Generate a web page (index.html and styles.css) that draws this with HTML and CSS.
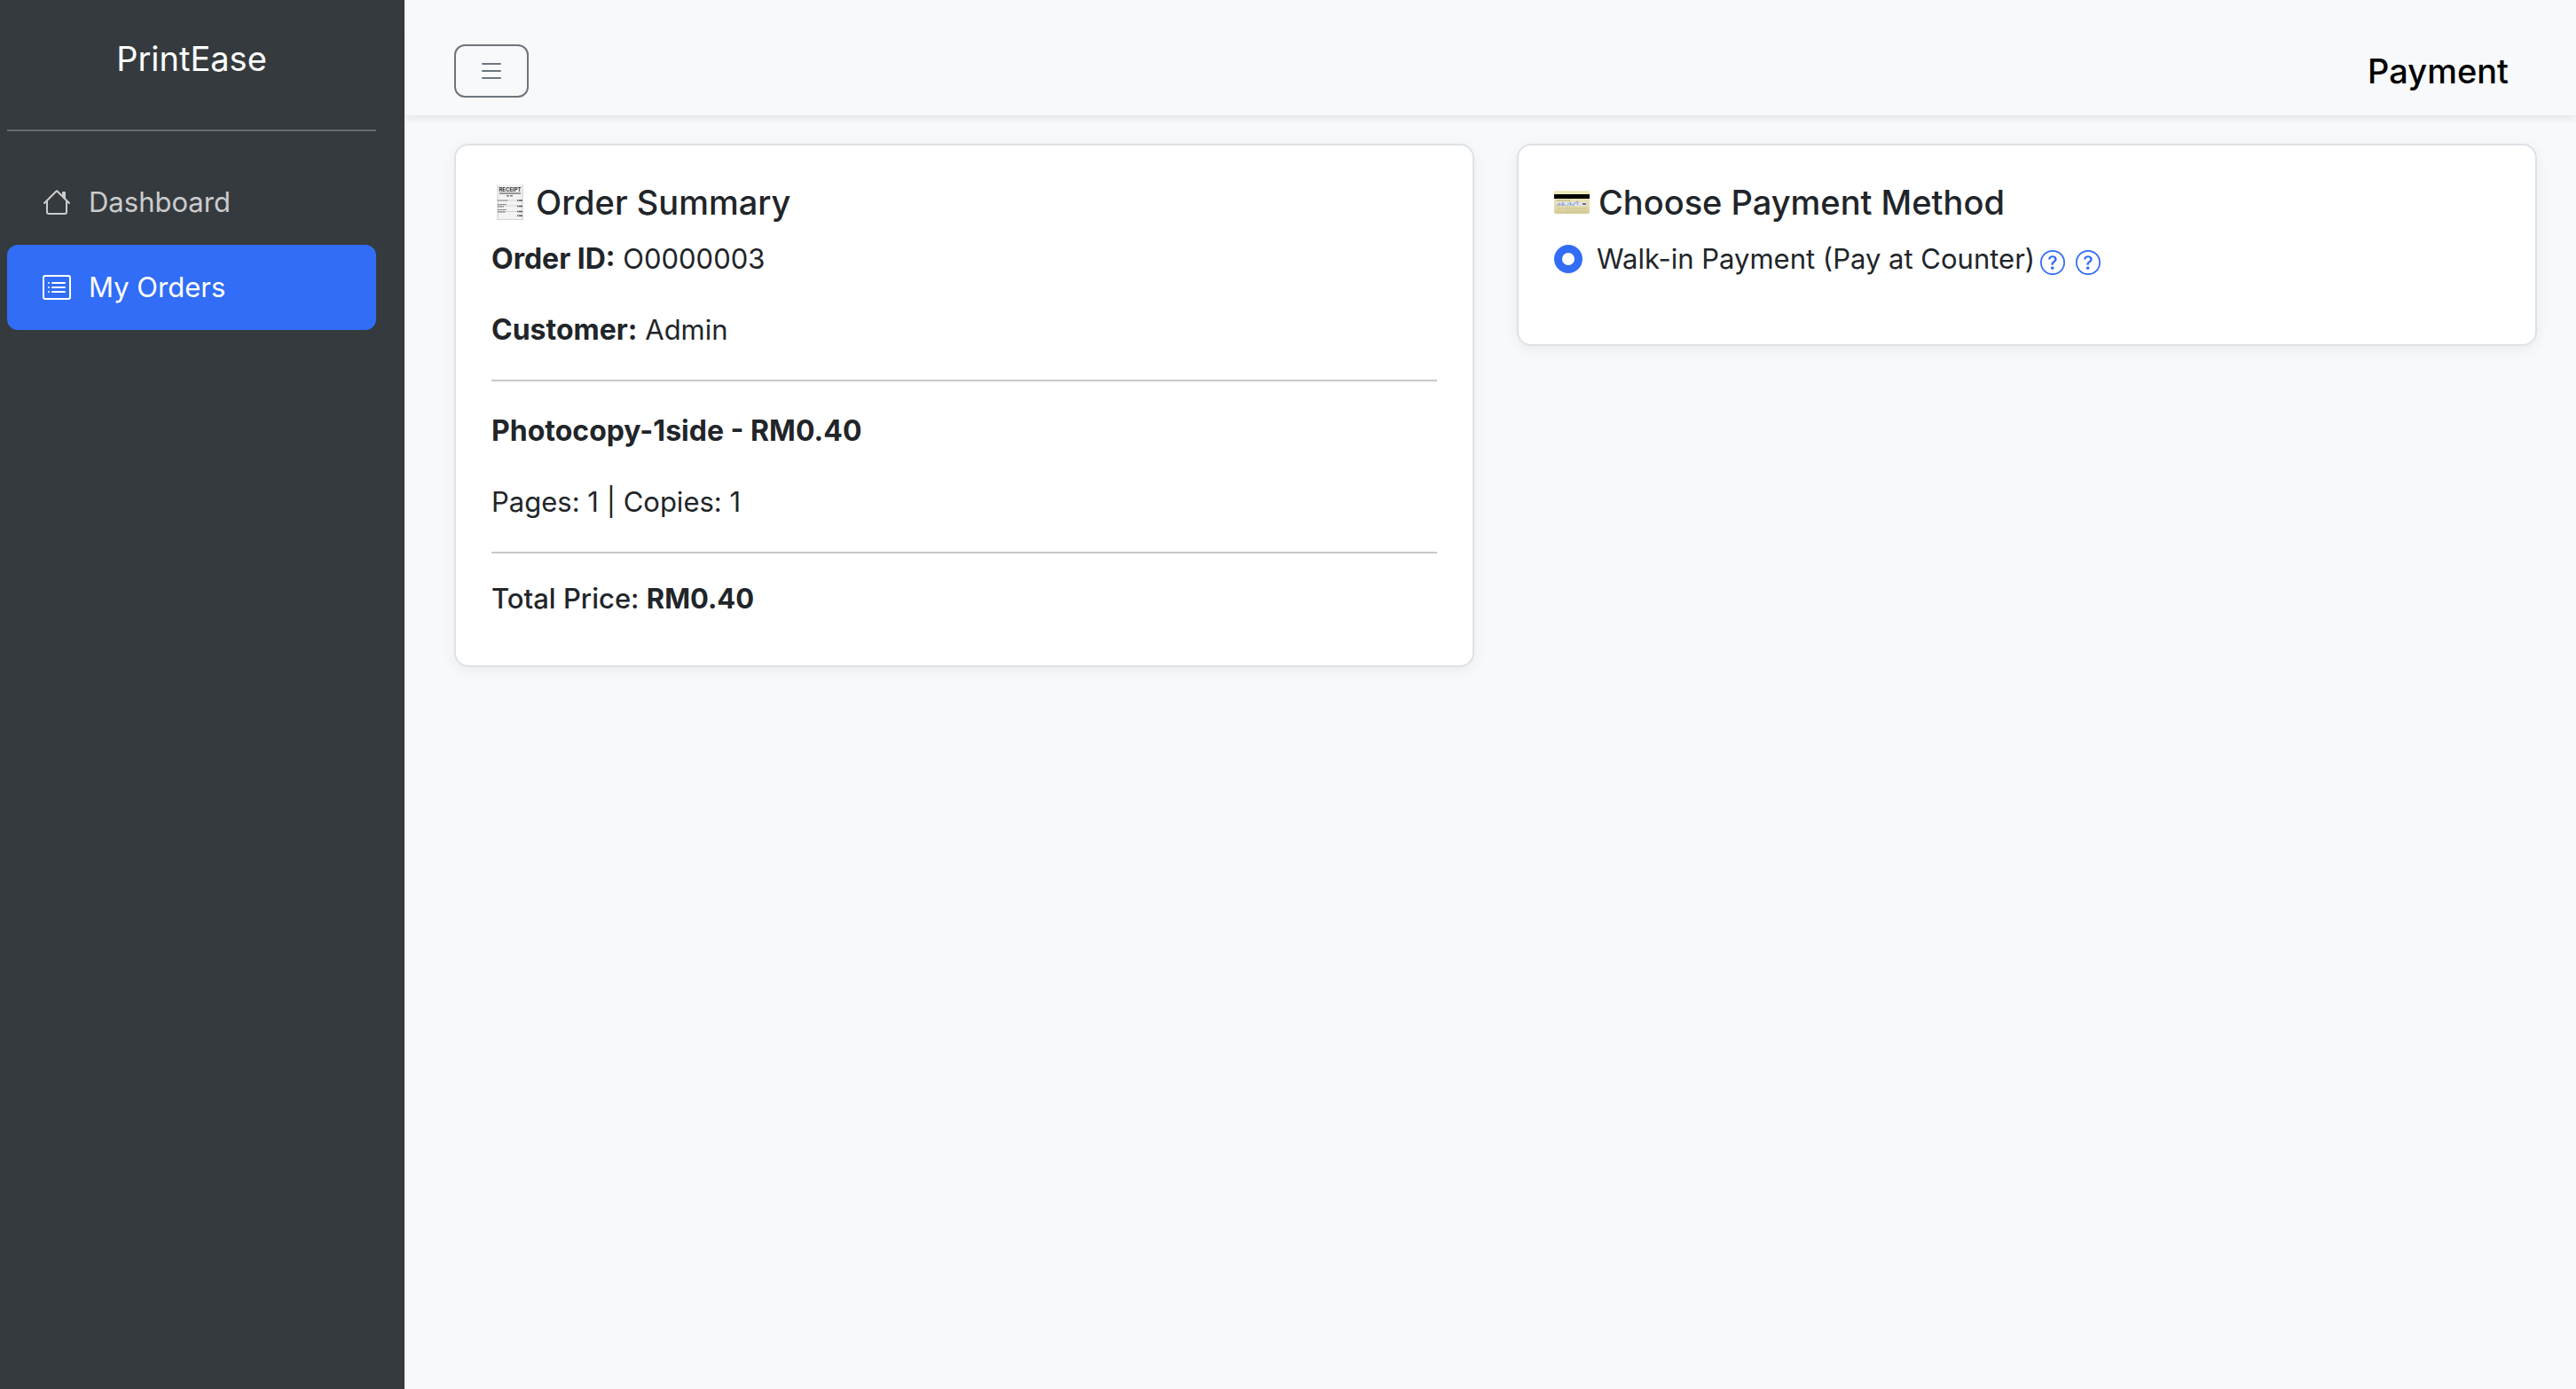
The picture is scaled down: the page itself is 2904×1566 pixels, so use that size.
FILE: index.html
```html
<!DOCTYPE html>
<html lang="en">
<head>
<meta charset="utf-8">
<meta name="viewport" content="width=device-width, initial-scale=1">
<title>Payment - PrintEase</title>
<link rel="stylesheet" href="styles.css">
</head>
<body>
<div class="layout">
  <aside class="sidebar">
    <div class="brand">PrintEase</div>
    <hr class="sidebar-divider">
    <nav class="menu" aria-label="Main">
      <a class="menu-link" href="#dashboard">
        <svg class="menu-icon" viewBox="0 0 16 16" fill="currentColor" aria-hidden="true"><path d="M8.707 1.5a1 1 0 0 0-1.414 0L.646 8.146a.5.5 0 0 0 .708.708L2 8.207V13.5A1.5 1.5 0 0 0 3.5 15h9a1.5 1.5 0 0 0 1.5-1.5V8.207l.646.647a.5.5 0 0 0 .708-.708L13 5.793V2.5a.5.5 0 0 0-.5-.5h-1a.5.5 0 0 0-.5.5v1.293zM13 7.207V13.5a.5.5 0 0 1-.5.5h-9a.5.5 0 0 1-.5-.5V7.207l5-5z"/></svg>
        <span>Dashboard</span>
      </a>
      <a class="menu-link active" href="#orders" aria-current="page">
        <svg class="menu-icon" viewBox="0 0 16 16" fill="currentColor" aria-hidden="true"><path d="M14.5 2a.5.5 0 0 1 .5.5v11a.5.5 0 0 1-.5.5h-13a.5.5 0 0 1-.5-.5v-11a.5.5 0 0 1 .5-.5zm-13-1A1.5 1.5 0 0 0 0 2.500v11A1.500 1.500 0 0 0 1.500 15h13a1.500 1.500 0 0 0 1.500-1.500v-11A1.500 1.500 0 0 0 14.500 1z"/><path d="M5 8a.5.5 0 0 1 .5-.5h7a.5.5 0 0 1 0 1h-7A.5.5 0 0 1 5 8m0-2.500a.5.5 0 0 1 .5-.5h7a.5.5 0 0 1 0 1h-7a.5.5 0 0 1-.5-.5m0 5a.5.5 0 0 1 .5-.5h7a.5.5 0 0 1 0 1h-7a.5.5 0 0 1-.5-.5m-1-5a.5.5 0 1 1-1 0 .5.5 0 0 1 1 0M4 8a.5.5 0 1 1-1 0 .5.5 0 0 1 1 0m0 2.500a.5.5 0 1 1-1 0 .5.5 0 0 1 1 0"/></svg>
        <span>My Orders</span>
      </a>
    </nav>
  </aside>

  <div class="content">
    <header class="topbar">
      <button class="toggle" type="button" aria-label="Toggle sidebar">
        <svg class="toggle-icon" viewBox="0 0 16 16" fill="currentColor" aria-hidden="true"><path fill-rule="evenodd" d="M2.500 12a.5.5 0 0 1 .5-.5h10a.5.5 0 0 1 0 1H3a.5.5 0 0 1-.5-.5m0-4a.5.5 0 0 1 .5-.5h10a.5.5 0 0 1 0 1H3a.5.5 0 0 1-.5-.5m0-4a.5.5 0 0 1 .5-.5h10a.5.5 0 0 1 0 1H3a.5.5 0 0 1-.5-.5"/></svg>
      </button>
      <h1 class="page-title">Payment</h1>
    </header>

    <main class="cards">
      <section class="card">
        <h2 class="card-title">
          <svg class="title-icon" viewBox="0 0 40 48" aria-hidden="true">
            <defs><linearGradient id="paper" x1="0" x2="1"><stop offset="0" stop-color="#e0e0e0"/><stop offset=".12" stop-color="#f3f3f3"/><stop offset=".88" stop-color="#f3f3f3"/><stop offset="1" stop-color="#dcdcdc"/></linearGradient></defs>
            <rect x="6" y="4" width="30" height="40" rx="1" fill="url(#paper)"/>
            <path d="M6 43.500h30" stroke="#d2d2d2"/>
            <text class="receipt-text" x="21" y="12" text-anchor="middle">RECEIPT</text>
            <path d="M9 14h24" stroke="#777" stroke-width="1.500"/>
            <path d="M17 16.700h8" stroke="#777" stroke-width="1.500" stroke-dasharray="3 1"/>
            <path d="M7 22h28M7 28h28M7 34.500h28" stroke="#ccc" stroke-width=".8"/>
            <path d="M7 22h11M7 26.500h10M7 28.800h7M7 32.500h10M7 34.800h9" stroke="#777" stroke-width="1.200" stroke-dasharray="2.400 .5"/>
            <path d="M29 22h6M29 28.500h6M29 34.500h6M29 39.300h6" stroke="#555" stroke-width="1.400" stroke-dasharray="1.500 .5 4 0"/>
          </svg>
          <span>Order Summary</span>
        </h2>
        <p class="row"><strong>Order ID:</strong> O0000003</p>
        <p class="row"><strong>Customer:</strong> Admin</p>
        <hr class="divider">
        <p class="row"><strong>Photocopy-1side - RM0.40</strong></p>
        <p class="row">Pages: 1 | Copies: 1</p>
        <hr class="divider">
        <p class="total">Total Price: <strong>RM0.40</strong></p>
      </section>

      <section class="card">
        <h2 class="card-title">
          <svg class="title-icon" viewBox="0 0 40 48" aria-hidden="true">
            <defs><linearGradient id="plastic" x1="0" y1="0" x2="0" y2="1"><stop offset="0" stop-color="#efe9bd"/><stop offset=".6" stop-color="#e6deae"/><stop offset="1" stop-color="#d3ca98"/></linearGradient></defs>
            <rect x="0" y="11" width="40" height="26" rx="2" fill="url(#plastic)"/>
            <rect x="0" y="15" width="40" height="5" fill="#000"/>
            <path d="M3 22h15" stroke="#a9a27c" stroke-dasharray="2 .6"/>
            <rect x="3" y="24" width="34" height="4" fill="#dfe3ea"/>
            <path d="M3 28q2-3 3-3t-1 3q2-2 3-1t2-3v4q1-3 3 0M15 28q2-5 4-3l-1 3q2-3 3-1t2-2l4-2-1 4" fill="none" stroke="#7f96cc" stroke-width=".9"/>
            <path d="M32 26h4" stroke="#555" stroke-width="1.600"/>
            <path d="M4 31h7M13 31h24M13 34.500h24" stroke="#cfc79b" stroke-width="1.500" stroke-dasharray="3 1"/>
          </svg>
          <span>Choose Payment Method</span>
        </h2>
        <div class="option">
          <input class="radio" type="radio" name="payment" id="walk-in" checked>
          <label for="walk-in">Walk-in Payment (Pay at Counter)</label>
          <span class="help-links">
            <a class="help" href="#help" aria-label="Payment help"><svg viewBox="0 0 16 16" fill="currentColor" aria-hidden="true"><path d="M8 15A7 7 0 1 1 8 1a7 7 0 0 1 0 14m0 1A8 8 0 1 0 8 0a8 8 0 0 0 0 16"/><path d="M5.255 5.786a.237.237 0 0 0 .241.247h.825c.138 0 .248-.113.266-.25.09-.656.54-1.134 1.342-1.134.686 0 1.314.343 1.314 1.168 0 .635-.374.927-.965 1.371-.673.489-1.206 1.060-1.168 1.987l.003.217a.25.25 0 0 0 .25.246h.811a.25.25 0 0 0 .25-.25v-.105c0-.718.273-.927 1.010-1.486.609-.463 1.244-.977 1.244-2.056 0-1.511-1.276-2.241-2.673-2.241-1.267 0-2.655.590-2.750 2.286m1.557 5.763c0 .533.425.927 1.010.927.609 0 1.028-.394 1.028-.927 0-.552-.420-.940-1.029-.940-.584 0-1.009.388-1.009.940"/></svg></a>
            <a class="help" href="#counter" aria-label="Counter help"><svg viewBox="0 0 16 16" fill="currentColor" aria-hidden="true"><path d="M8 15A7 7 0 1 1 8 1a7 7 0 0 1 0 14m0 1A8 8 0 1 0 8 0a8 8 0 0 0 0 16"/><path d="M5.255 5.786a.237.237 0 0 0 .241.247h.825c.138 0 .248-.113.266-.25.09-.656.54-1.134 1.342-1.134.686 0 1.314.343 1.314 1.168 0 .635-.374.927-.965 1.371-.673.489-1.206 1.060-1.168 1.987l.003.217a.25.25 0 0 0 .25.246h.811a.25.25 0 0 0 .25-.25v-.105c0-.718.273-.927 1.010-1.486.609-.463 1.244-.977 1.244-2.056 0-1.511-1.276-2.241-2.673-2.241-1.267 0-2.655.590-2.750 2.286m1.557 5.763c0 .533.425.927 1.010.927.609 0 1.028-.394 1.028-.927 0-.552-.420-.940-1.029-.940-.584 0-1.009.388-1.009.940"/></svg></a>
          </span>
        </div>
      </section>
    </main>
  </div>
</div>
</body>
</html>
```

FILE: styles.css
```css
*, *::before, *::after { box-sizing: border-box; }

body {
  margin: 0;
  background: #f8f9fb;
  color: #212529;
  font-family: Inter, "Liberation Sans", sans-serif;
  font-size: 31px;
  line-height: 48px;
}

h1, h2, p { margin: 0; }
hr { border: 0; margin: 0; }

.layout { display: flex; min-height: 100vh; }

/* Sidebar */
.sidebar {
  flex: 0 0 456px;
  padding: 42px 32px 32px 8px;
  background: #353a3e;
  color: #fff;
}
.brand { padding-bottom: 56px; font-size: 38px; text-align: center; }
.sidebar-divider { height: 2px; margin-bottom: 32px; background: #686b6f; }
.menu { display: flex; flex-direction: column; }
.menu-link {
  display: flex;
  align-items: center;
  gap: 20px;
  padding: 24px 40px;
  border-radius: 12px;
  color: #ccc;
  text-decoration: none;
}
.menu-link.active { background: #316df6; color: #fff; }
.menu-icon { width: 32px; height: 32px; }

/* Top bar */
.content { flex: 1; min-width: 0; padding-top: 30px; }
.topbar {
  display: flex;
  align-items: center;
  justify-content: space-between;
  height: 100px;
  padding: 0 76px 0 56px;
  background: #f8f9fb;
  box-shadow: 0 4px 8px rgba(0, 0, 0, .075);
}
.toggle {
  display: flex;
  align-items: center;
  justify-content: center;
  width: 84px;
  height: 60px;
  padding: 0;
  border: 2px solid #6c757d;
  border-radius: 12px;
  background: transparent;
  color: #6c757d;
}
.toggle-icon { width: 32px; height: 32px; }
.page-title { color: #000; font-size: 38px; font-weight: 500; }

/* Cards */
.cards {
  display: grid;
  grid-template-columns: 1fr 1fr;
  align-items: start;
  gap: 48px;
  padding: 32px 44px 48px 56px;
}
.card {
  padding: 40px;
  border: 2px solid #dee2e6;
  border-radius: 16px;
  background: #fff;
  box-shadow: 0 4px 16px rgba(0, 0, 0, .06);
}
.card-title {
  display: flex;
  gap: 10px;
  margin-bottom: 16px;
  font-size: 38px;
  font-weight: 500;
}
.title-icon { width: 40px; height: 48px; }
.receipt-text { font-size: 6px; font-weight: 700; fill: #333; }
.row { height: 48px; margin-bottom: 32px; }
.row strong { font-size: 32px; }
.row strong, .total strong { font-weight: 700; }
.divider { height: 2px; margin-bottom: 32px; background: #c7c8c9; }
.total { margin-bottom: 16px; font-weight: 500; line-height: 38px; }

.option { display: flex; align-items: center; gap: 6px; margin-bottom: 32px; }
.radio {
  width: 32px;
  height: 32px;
  margin: 0 10px 0 0;
  border: 9px solid #316df6;
  border-radius: 50%;
  background: #fff;
  appearance: none;
}
.help-links { display: flex; gap: 12px; padding-top: 8px; }
.help { display: flex; color: #316df6; }
.help svg { width: 28px; height: 28px; }
```
